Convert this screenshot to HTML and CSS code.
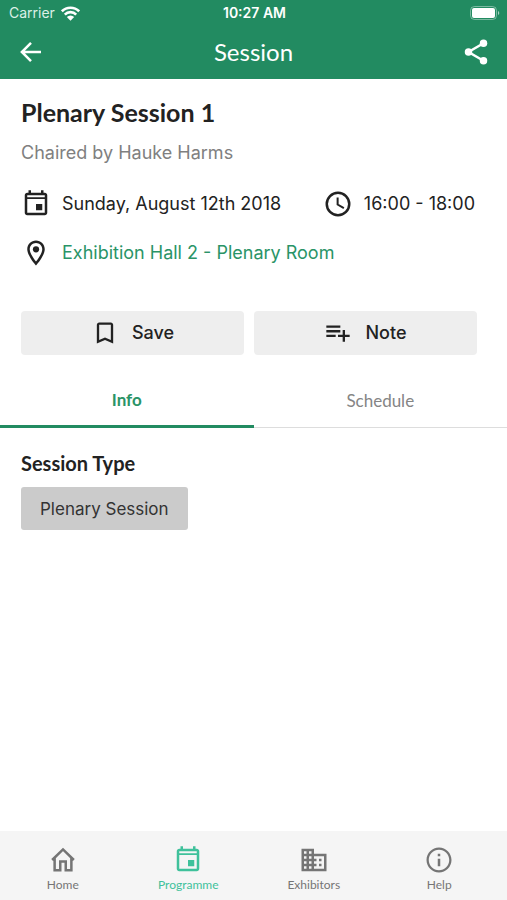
FILE: index.html
```html
<!DOCTYPE html>
<html lang="en">
<head>
<meta charset="utf-8">
<meta name="viewport" content="width=device-width, initial-scale=1">
<title>Session</title>
<link rel="stylesheet" href="styles.css">
</head>
<body>
<header class="top">
  <div class="status">
    <span class="carrier">Carrier
      <svg class="wifi" viewBox="0 0 18 14" aria-hidden="true"><path d="M.8 4.900a11.600 11.600 0 0 1 16.400 0M3.600 8a7.600 7.600 0 0 1 10.800 0" fill="none" stroke="currentColor" stroke-width="2.500"/><path d="M9 13.800 5.500 10.300a4.900 4.900 0 0 1 7 0z" fill="currentColor"/></svg>
    </span>
    <span class="clock">10:27 AM</span>
    <svg class="battery" viewBox="0 0 30 14" aria-hidden="true"><rect x=".5" y=".5" width="26" height="13" rx="4" fill="none" stroke="currentColor" opacity=".4"/><rect x="2" y="2" width="23" height="10" rx="2" fill="currentColor"/><path d="M28 5v4a2.200 2.200 0 0 0 0-4z" fill="currentColor" opacity=".6"/></svg>
  </div>
  <div class="bar">
    <button class="bar-button" type="button" aria-label="Back"><svg class="icon" viewBox="0 0 24 24"><path d="M20 12H5M12 4.700 4.700 12l7.300 7.300" fill="none" stroke="currentColor" stroke-width="2"/></svg></button>
    <h1 class="bar-title">Session</h1>
    <button class="bar-button" type="button" aria-label="Share"><svg class="icon" viewBox="0 0 24 24"><path d="M18 5 6 12l12 7" fill="none" stroke="currentColor" stroke-width="2"/><circle cx="18" cy="5" r="3"/><circle cx="6" cy="12" r="3"/><circle cx="18" cy="19" r="3"/></svg></button>
  </div>
</header>

<main class="page">
  <section class="summary">
    <h2 class="session-name">Plenary Session 1</h2>
    <p class="chair">Chaired by Hauke Harms</p>
    <div class="facts">
      <p class="fact"><svg class="icon" viewBox="0 0 24 24" aria-hidden="true"><path d="M17 12h-5v5h5v-5zM16 1v2H8V1H6v2H5c-1.110 0-1.990.9-1.990 2L3 19c0 1.100.89 2 2 2h14c1.100 0 2-.9 2-2V5c0-1.100-.9-2-2-2h-1V1h-2zm3 18H5V8h14v11zM5 6.600V5h14v1.600z"/></svg>Sunday, August 12th 2018</p>
      <p class="fact"><svg class="icon" viewBox="0 0 24 24" aria-hidden="true"><circle cx="12" cy="12" r="9" fill="none" stroke="currentColor" stroke-width="2"/><path d="M11.700 6.800v5.600l5 2.900" fill="none" stroke="currentColor" stroke-width="1.600"/></svg>16:00 - 18:00</p>
    </div>
    <p class="fact"><svg class="icon" viewBox="0 0 24 24" aria-hidden="true"><path d="M12 2C8.130 2 5 5.130 5 9c0 5.250 7 13 7 13s7-7.750 7-13c0-3.870-3.130-7-7-7zM7 9c0-2.760 2.240-5 5-5s5 2.240 5 5c0 2.880-2.880 7.190-5 9.880C9.920 16.210 7 11.850 7 9z"/><circle cx="12" cy="9" r="2.500"/></svg><a class="place" href="#room">Exhibition Hall 2 - Plenary Room</a></p>
    <div class="actions">
      <button class="action" type="button"><svg class="icon-small" viewBox="0 0 24 24" aria-hidden="true"><path d="M17 3H7c-1.100 0-1.990.9-1.990 2L5 21l7-3 7 3V5c0-1.100-.9-2-2-2zm0 15l-5-2.180L7 18V5h10v13z"/></svg>Save</button>
      <button class="action" type="button"><svg class="icon-small" viewBox="0 0 24 24" aria-hidden="true"><path d="M14 9.500H2v2h12zm0-4H2v2h12zm4 8v-4h-2v4h-4v2h4v4h2v-4h4v-2zM2 15.500h8v-2H2z"/></svg>Note</button>
    </div>
  </section>

  <div class="tabs" role="tablist">
    <button class="tab tab-active" type="button" role="tab" aria-selected="true">Info</button>
    <button class="tab" type="button" role="tab" aria-selected="false">Schedule</button>
  </div>

  <section class="details">
    <h3 class="label">Session Type</h3>
    <button class="chip" type="button">Plenary Session</button>
  </section>
</main>

<nav class="nav">
  <a class="nav-item" href="#home"><svg class="icon" viewBox="0 0 24 24" aria-hidden="true"><path d="M3.300 12 12 3.500l8.700 8.500M5.300 10.500V20.200h4.500V13.200h4.400v7h4.500V10.500" fill="none" stroke="currentColor" stroke-width="2"/></svg>Home</a>
  <a class="nav-item nav-active" href="#programme" aria-current="page"><svg class="icon" viewBox="0 0 24 24" aria-hidden="true"><path d="M17 12h-5v5h5v-5zM16 1v2H8V1H6v2H5c-1.110 0-1.990.9-1.990 2L3 19c0 1.100.89 2 2 2h14c1.100 0 2-.9 2-2V5c0-1.100-.9-2-2-2h-1V1h-2zm3 18H5V8h14v11zM5 6.600V5h14v1.600z"/></svg>Programme</a>
  <a class="nav-item" href="#exhibitors"><svg class="icon" viewBox="0 0 24 24" aria-hidden="true"><path d="M12 7V3H2v18h20V7H12zM6 19H4v-2h2v2zm0-4H4v-2h2v2zm0-4H4V9h2v2zm0-4H4V5h2v2zm4 12H8v-2h2v2zm0-4H8v-2h2v2zm0-4H8V9h2v2zm0-4H8V5h2v2zm10 12h-8v-2h2v-2h-2v-2h2v-2h-2V9h8v10zm-2-8h-2v2h2v-2zm0 4h-2v2h2v-2z"/></svg>Exhibitors</a>
  <a class="nav-item" href="#help"><svg class="icon" viewBox="0 0 24 24" aria-hidden="true"><path d="M11 17h2v-6h-2v6zm1-15C6.480 2 2 6.480 2 12s4.480 10 10 10 10-4.480 10-10S17.520 2 12 2zm0 18.200c-4.500 0-8.200-3.700-8.200-8.200S7.500 3.800 12 3.800s8.200 3.700 8.200 8.200-3.700 8.200-8.200 8.200zM11 9h2V7h-2v2z"/></svg>Help</a>
</nav>
</body>
</html>
```
FILE: styles.css
```css
* {
  box-sizing: border-box;
}

body {
  margin: 0;
  min-height: 100vh;
  display: flex;
  flex-direction: column;
  background: #fff;
  color: #222;
  font: 18px/24px Inter, "Liberation Sans", sans-serif;
}

h1, h2, h3, p {
  margin: 0;
}

button {
  border: 0;
  padding: 0;
  background: none;
  color: inherit;
  font: inherit;
  cursor: pointer;
}

a {
  color: inherit;
  text-decoration: none;
}

.icon {
  width: 30px;
  height: 30px;
  flex: none;
  display: block;
  fill: currentColor;
}

.icon-small {
  width: 28px;
  height: 28px;
  flex: none;
  fill: currentColor;
}

.top {
  background: #228b61;
  color: #fff;
}

.status {
  display: grid;
  grid-template-columns: 1fr auto 1fr;
  align-items: center;
  height: 26px;
  padding: 0 7px 0 9px;
  font-size: 14px;
  line-height: 20px;
}

.carrier {
  display: flex;
  align-items: center;
  gap: 6px;
  color: #dcf0e7;
}

.wifi {
  width: 19px;
  height: 15px;
  color: #fff;
}

.clock {
  font-size: 14px;
  font-weight: 600;
}

.battery {
  width: 30px;
  height: 14px;
  justify-self: end;
}

.bar {
  display: flex;
  align-items: center;
  justify-content: space-between;
  height: 53px;
  padding: 0 16px 1px;
}

.bar-title {
  font: 400 24px/32px Lato, sans-serif;
}

.page {
  flex: 1;
}

.summary {
  padding: 17px 30px 0 21px;
}

.session-name {
  font: 700 25px/32px Lato, sans-serif;
}

.chair {
  margin-top: 13px;
  color: #808080;
}

.facts {
  display: flex;
  justify-content: space-between;
  margin: 24px 2px 19px 0;
}

.fact {
  display: flex;
  align-items: center;
  gap: 11px;
  white-space: nowrap;
}

.place {
  color: #2a9467;
}

.actions {
  display: grid;
  grid-template-columns: 1fr 1fr;
  gap: 10px;
  margin-top: 43px;
}

.action {
  display: flex;
  align-items: center;
  justify-content: center;
  gap: 13px;
  height: 44px;
  border-radius: 4px;
  background: #eee;
  font-weight: 500;
}

.tabs {
  display: grid;
  grid-template-columns: 1fr 1fr;
  margin-top: 20px;
}

.tab {
  height: 53px;
  border-bottom: 1px solid #ddd;
  color: #858585;
  font: 400 17px/24px Lato, sans-serif;
}

.tab-active {
  border-bottom: 3px solid #228b61;
  color: #2a9467;
  font-weight: 700;
}

.details {
  padding: 23px 21px;
}

.label {
  font: 700 20px/24px Lato, sans-serif;
}

.chip {
  margin-top: 12px;
  height: 43px;
  padding: 0 19px;
  border-radius: 3px;
  background: #cbcbcb;
  color: #333;
  font-size: 17px;
}

.nav {
  display: grid;
  grid-template-columns: repeat(4, 1fr);
  height: 69px;
  padding: 14px 5px 0 0;
  background: #f5f5f5;
  color: #757575;
  font: 12px/16px Lato, sans-serif;
}

.nav-item {
  display: flex;
  flex-direction: column;
  align-items: center;
  gap: 2px;
}

.nav-active {
  color: #3fc19b;
}
```
